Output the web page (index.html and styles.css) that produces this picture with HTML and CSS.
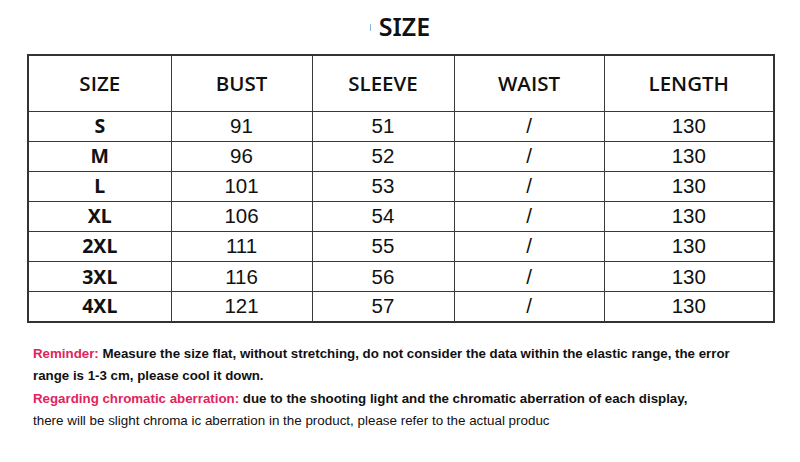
FILE: index.html
```html
<!DOCTYPE html>
<html>
<head>
<meta charset="utf-8">
<link rel="stylesheet" href="styles.css">
</head>
<body>
<div class="page">
  <h1 class="title"><span class="mark"></span>SIZE</h1>
  <table class="chart">
    <colgroup>
      <col class="c1"><col class="c2"><col class="c3"><col class="c4"><col class="c5">
    </colgroup>
    <thead>
      <tr><th>SIZE</th><th>BUST</th><th>SLEEVE</th><th>WAIST</th><th>LENGTH</th></tr>
    </thead>
    <tbody>
      <tr><td class="sz">S</td><td>91</td><td>51</td><td>/</td><td>130</td></tr>
      <tr><td class="sz">M</td><td>96</td><td>52</td><td>/</td><td>130</td></tr>
      <tr><td class="sz">L</td><td>101</td><td>53</td><td>/</td><td>130</td></tr>
      <tr><td class="sz">XL</td><td>106</td><td>54</td><td>/</td><td>130</td></tr>
      <tr><td class="sz">2XL</td><td>111</td><td>55</td><td>/</td><td>130</td></tr>
      <tr><td class="sz">3XL</td><td>116</td><td>56</td><td>/</td><td>130</td></tr>
      <tr><td class="sz">4XL</td><td>121</td><td>57</td><td>/</td><td>130</td></tr>
    </tbody>
  </table>
  <div class="notes">
    <p><span class="red">Reminder:</span> Measure the size flat, without stretching, do not consider the data within the elastic range, the error</p>
    <p>range is 1-3 cm, please cool it down.</p>
    <p><span class="red">Regarding chromatic aberration:</span> due to the shooting light and the chromatic aberration of each display,</p>
    <p class="light">there will be slight chroma ic aberration in the product, please refer to the actual produc</p>
  </div>
</div>
</body>
</html>
```

FILE: styles.css
```css
html, body {
  margin: 0;
  padding: 0;
  background: #fff;
}
.page {
  width: 800px;
  height: 462px;
  overflow: hidden;
}
.title {
  margin: 0;
  height: 54px;
  display: flex;
  align-items: center;
  justify-content: center;
  box-sizing: border-box;
  padding-bottom: 2px;
  font-family: "Noto Sans", "Open Sans", sans-serif;
  font-weight: 600;
  font-size: 25px;
  color: #111;
}
.mark {
  display: inline-block;
  width: 1px;
  height: 7px;
  background: #8fb3e0;
  margin-right: 8px;
  margin-top: 2px;
}
.chart {
  margin-left: 27px;
  width: 746px;
  border-collapse: collapse;
  table-layout: fixed;
  border: 2px solid #333;
}
.c1 { width: 143px; }
.c2 { width: 141px; }
.c3 { width: 142px; }
.c4 { width: 150px; }
.c5 { width: 170px; }
.chart th, .chart td {
  border: 1.5px solid #3a3a3a;
  text-align: center;
  padding: 0;
  color: #111;
}
.chart thead tr {
  height: 56px;
}
.chart th {
  font-family: "Open Sans", "Noto Sans", sans-serif;
  font-weight: 600;
  font-size: 20.5px;
}
.chart tbody tr {
  height: 30.1px;
}
.chart td {
  font-family: "Liberation Sans", Arial, sans-serif;
  font-size: 20.5px;
  font-weight: 400;
  line-height: 20px;
}
.chart td.sz {
  font-family: "Noto Sans", "Open Sans", sans-serif;
  font-weight: 700;
  font-size: 19.5px;
}
.notes {
  margin-top: 20px;
  padding-left: 33px;
  font-family: "Liberation Sans", Arial, sans-serif;
  font-size: 13.3px;
  font-weight: 700;
  color: #111;
}
.notes p {
  margin: 0;
  height: 22.5px;
  line-height: 22.5px;
  white-space: nowrap;
}
.notes .red {
  color: #e0245e;
}
.notes .light {
  font-weight: 400;
  font-size: 13.4px;
}
```
